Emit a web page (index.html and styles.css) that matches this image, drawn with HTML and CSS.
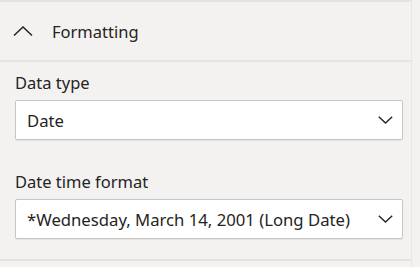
FILE: index.html
```html
<!DOCTYPE html>
<html lang="en">

<head>
    <meta charset="UTF-8">
    <title>Formatting</title>
    <link rel="stylesheet" href="styles.css">
</head>

<body>
    <div class="pane">
        <!-- Card header -->
        <div class="card-header">
            <svg class="chevron-up" width="20" height="10" viewBox="0 0 20 10">
                <path d="M1 9.5 L10 1 L19 9.5" fill="none" stroke="#252423" stroke-width="1.5"/>
            </svg>
            <span>Formatting</span>
        </div>

        <!-- Fields -->
        <div class="card-body">
            <div class="field">
                <label>Data type</label>
                <div class="dropdown">
                    <span>Date</span>
                    <svg class="chevron-down" width="15" height="8" viewBox="0 0 15 8">
                        <path d="M0.8 0.8 L7.5 7 L14.2 0.8" fill="none" stroke="#252423" stroke-width="1.4"/>
                    </svg>
                </div>
            </div>

            <div class="field">
                <label>Date time format</label>
                <div class="dropdown">
                    <span>*Wednesday, March 14, 2001 (Long Date)</span>
                    <svg class="chevron-down" width="15" height="8" viewBox="0 0 15 8">
                        <path d="M0.8 0.8 L7.5 7 L14.2 0.8" fill="none" stroke="#252423" stroke-width="1.4"/>
                    </svg>
                </div>
            </div>
        </div>
    </div>
</body>

</html>
```

FILE: styles.css
```css
* {
    box-sizing: border-box;
    margin: 0;
    padding: 0;
}

body {
    background: #f3f2f1;
    font-family: "Noto Sans", "Open Sans", sans-serif;
    color: #252423;
    width: 420px;
    height: 267px;
    overflow: hidden;
}

.pane {
    border-top: 2px solid #e4e3e1;
    border-right: 1px solid #e8e7e5;
    height: 100%;
    margin-right: 8px;
}

/* Card header */

.card-header {
    height: 60px;
    display: flex;
    align-items: center;
    padding-left: 13px;
    font-size: 16.5px;
    border-bottom: 2px solid #e6e4e2;
}

.chevron-up {
    margin-right: 19px;
    margin-top: -1px;
}

/* Fields */

.card-body {
    padding: 10px 0 20px 15px;
    border-bottom: 2px solid #e6e4e2;
}

.field label {
    display: block;
    font-size: 16.5px;
    line-height: 22px;
    margin-bottom: 6px;
}

.field + .field {
    margin-top: 31px;
}

.dropdown {
    width: 388px;
    height: 40px;
    background: #fff;
    border: 1px solid #c8c6c4;
    border-radius: 2px;
    box-shadow: 0 1px 1px rgba(0, 0, 0, 0.06);
    display: flex;
    align-items: center;
    justify-content: space-between;
    padding: 0 9px 0 11px;
    font-size: 16.7px;
}
```
